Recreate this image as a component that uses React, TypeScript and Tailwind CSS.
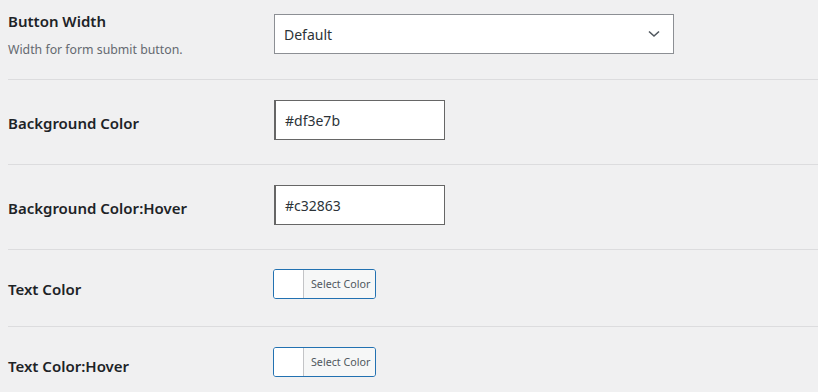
import React from 'react';

const font = { fontFamily: '"Noto Sans", "Open Sans", sans-serif' };

const Label: React.FC<{ text: string; pt: string }> = ({ text, pt }) => (
  <div className={`w-[266px] shrink-0 ${pt}`}>
    <p className="text-[15px] leading-[20px] font-semibold text-[#1d2327]">{text}</p>
  </div>
);

const ColorInput: React.FC<{ value: string }> = ({ value }) => (
  <div className="w-[171px] h-[40px] bg-white border border-[#666666] border-l-2 flex items-center pl-[9px] text-[14px] text-[#2c3338]">
    {value}
  </div>
);

const ColorPicker: React.FC = () => (
  <div className="w-[103px] h-[30px] flex border border-[#2271b1] rounded-[3px] overflow-hidden">
    <div className="w-[30px] bg-white border-r border-[#c3c4c7]" />
    <div className="flex-1 bg-[#f6f7f7] flex items-center pl-[7px] text-[10.7px] text-[#50575e]">Select Color</div>
  </div>
);

export default function App() {
  return (
    <div className="w-[818px] h-[392px] bg-[#f0f0f1] pl-[8px] overflow-hidden" style={font}>
      {/* button width */}
      <div className="flex border-b border-[#dcdcde] h-[80px]">
        <div className="w-[266px] shrink-0 pt-[11px]">
          <p className="text-[15px] leading-[20px] font-semibold text-[#1d2327]">Button Width</p>
          <p className="mt-[9px] text-[12.3px] leading-[20px] text-[#646970]">Width for form submit button.</p>
        </div>
        <div className="pt-[14px]">
          <div className="w-[400px] h-[40px] bg-white border border-[#8c8f94] flex items-center justify-between pl-[9px] pr-[13px] text-[14px] text-[#2c3338]">
            <span>Default</span>
            <svg width="12" height="8" viewBox="0 0 12 8" fill="none">
              <path d="M1 1.5 L6 6 L11 1.5" stroke="#50575e" strokeWidth="1.6" />
            </svg>
          </div>
        </div>
      </div>

      <div className="flex border-b border-[#dcdcde] h-[85px]">
        <Label text="Background Color" pt="pt-[33px]" />
        <div className="pt-[20px]">
          <ColorInput value="#df3e7b" />
        </div>
      </div>

      <div className="flex border-b border-[#dcdcde] h-[85px]">
        <Label text="Background Color:Hover" pt="pt-[33px]" />
        <div className="pt-[20px]">
          <ColorInput value="#c32863" />
        </div>
      </div>

      <div className="flex border-b border-[#dcdcde] h-[77px]">
        <Label text="Text Color" pt="pt-[29px]" />
        <div className="pt-[19px] -ml-[1px]">
          <ColorPicker />
        </div>
      </div>

      <div className="flex h-[65px]">
        <Label text="Text Color:Hover" pt="pt-[29px]" />
        <div className="pt-[20px] -ml-[1px]">
          <ColorPicker />
        </div>
      </div>
    </div>
  );
}
